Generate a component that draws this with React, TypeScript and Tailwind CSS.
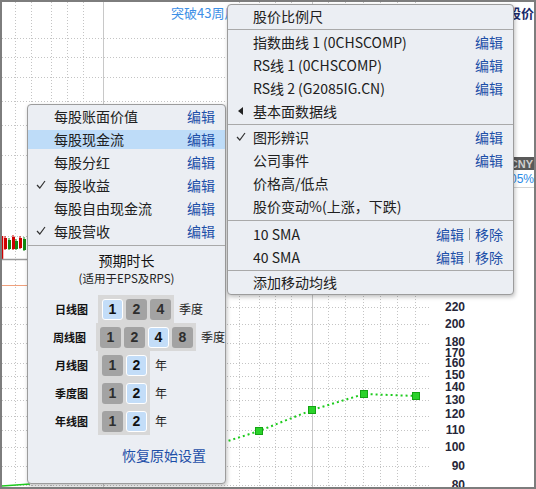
import React from 'react';

const H_LINES = [38, 57, 77, 101, 125, 155, 184, 207, 236, 307, 324, 343, 363, 376, 388, 400, 416, 430, 447, 466, 485];
const V_DOTS = [15, 31, 51, 67, 83, 239, 259, 275, 291, 328, 345, 363, 380, 397, 415];
const V_SOLID = [103, 312];
const AXIS: [string, number][] = [
  ['220', 307], ['200', 324], ['180', 342], ['170', 353], ['160', 363], ['150', 375], ['140', 387],
  ['130', 400], ['120', 414], ['110', 430], ['100', 447], ['90', 466], ['80', 485],
];
const GREEN_PTS: [number, number][] = [[200, 450], [259, 431], [312, 410], [364, 394], [416, 396]];

function Chart() {
  return (
    <svg className="absolute left-0 top-0" width={532} height={485} viewBox="2 2 532 485">
      {H_LINES.map((y) => (
        <line key={'h' + y} x1={2} x2={430} y1={y + 0.5} y2={y + 0.5} stroke="#c4c4c4" strokeDasharray="1 2" />
      ))}
      {V_DOTS.map((x) => (
        <line key={'v' + x} x1={x + 0.5} x2={x + 0.5} y1={2} y2={488} stroke="#c4c4c4" strokeDasharray="1 2" />
      ))}
      {V_SOLID.map((x) => (
        <line key={'s' + x} x1={x + 0.5} x2={x + 0.5} y1={2} y2={488} stroke="#c8c8c8" />
      ))}
      {/* price candles on the left */}
      <line x1={2.5} x2={2.5} y1={236} y2={259} stroke="#d00000" strokeWidth={1.5} />
      {[
        [4, 238, 11, '#d00000'], [8, 240, 9, '#138a13'], [12, 237, 12, '#d00000'], [15, 241, 8, '#138a13'],
        [19, 238, 10, '#d00000'], [23, 239, 11, '#138a13'],
      ].map(([x, y, h, c], i) => (
        <g key={i}>
          <line x1={(x as number) + 1} x2={(x as number) + 1} y1={(y as number) - 2} y2={(y as number) + (h as number) + 1} stroke={c as string} />
          <rect x={x as number} y={y as number} width={3} height={h as number} fill={c as string} />
        </g>
      ))}
      <line x1={2} x2={30} y1={259.5} y2={259.5} stroke="#9a9a9a" strokeWidth={1.5} />
      <line x1={2} x2={30} y1={285.5} y2={285.5} stroke="#f0a07c" />
      <line x1={2} x2={30} y1={486} y2={484} stroke="#1ecb1e" strokeWidth={1.5} />
      {/* green fundamental line */}
      <polyline
        points={GREEN_PTS.map((p) => p.join(',')).join(' ')}
        fill="none"
        stroke="#1ecb1e"
        strokeWidth={2}
        strokeDasharray="2 3"
      />
      {GREEN_PTS.slice(1).map(([x, y]) => (
        <rect key={x} x={x - 3.5} y={y - 3.5} width={7} height={7} fill="#2ad22a" stroke="#13a313" />
      ))}
      {AXIS.map(([t, y]) => (
        <text
          key={t}
          x={465}
          y={y + 4.3}
          textAnchor="end"
          fontFamily="Liberation Sans, Arial, sans-serif"
          fontWeight={700}
          fontSize={12}
          fill="#262638"
        >
          {t}
        </text>
      ))}
      <text x={171} y={18} fontFamily="Noto Sans CJK SC, sans-serif" fontSize={13} fill="#3d8fe6">
        突破43周后
      </text>
      <text x={508} y={18} fontFamily="Noto Sans CJK SC, sans-serif" fontWeight={700} fontSize={13} fill="#1a2a6a">
        股价
      </text>
      <rect x={500} y={157} width={34} height={13} fill="#5a5a5a" />
      <text x={533} y={167.5} textAnchor="end" fontFamily="Liberation Sans, Arial, sans-serif" fontWeight={700} fontSize={11} fill="#cfcfcf">
        CNY
      </text>
      <text x={534} y={183} textAnchor="end" fontFamily="Liberation Sans, Arial, sans-serif" fontSize={12} fill="#2a8ae6">
        +1.05%
      </text>
      <line x1={500} x2={534} y1={187.5} y2={187.5} stroke="#d4d4d4" />
    </svg>
  );
}

function Check() {
  return (
    <svg width={10} height={9} viewBox="0 0 10 9">
      <path d="M1 5 L3.8 8 L9 1" fill="none" stroke="#333" strokeWidth={1.2} />
    </svg>
  );
}

function LeftArrow() {
  return (
    <svg width={5} height={8} viewBox="0 0 5 8">
      <path d="M5 0 L0 4 L5 8 Z" fill="#222" />
    </svg>
  );
}

type RowProps = {
  label: string;
  check?: boolean;
  arrow?: boolean;
  edit?: boolean;
  remove?: boolean;
  active?: boolean;
  h?: string;
  slot: string;
};

function MenuRow({ label, check, arrow, edit, remove, active, h = 'h-[23px]', slot }: RowProps) {
  return (
    <div className={`flex items-center ${h}`}>
      <div className={`flex h-[19px] w-full items-center pb-[2px] pr-[10px] ${active ? 'bg-[#bedcf8]' : ''}`}>
        <div className={`flex ${slot} shrink-0 justify-center`}>
          {check && <Check />}
          {arrow && <LeftArrow />}
        </div>
        <span className="flex-1 whitespace-nowrap text-[#202020]">{label}</span>
        {edit && <span className="text-[#1d4fa8]">编辑</span>}
        {remove && (
          <>
            <span className="mx-[5px] h-[12px] w-px bg-[#9a9a9a]" />
            <span className="text-[#1d4fa8]">移除</span>
          </>
        )}
      </div>
    </div>
  );
}

function Sep({ pad = 'py-[1px]' }: { pad?: string }) {
  return (
    <div className={pad}>
      <div className="h-px bg-[#a9a9a9]" />
    </div>
  );
}

const SUB_ITEMS = [
  { label: '每股账面价值' },
  { label: '每股现金流', active: true },
  { label: '每股分红' },
  { label: '每股收益', check: true },
  { label: '每股自由现金流' },
  { label: '每股营收', check: true },
];

const PERIODS = [
  { name: '日线图', opts: ['1', '2', '4'], sel: '1', unit: '季度' },
  { name: '周线图', opts: ['1', '2', '4', '8'], sel: '4', unit: '季度' },
  { name: '月线图', opts: ['1', '2'], sel: '2', unit: '年' },
  { name: '季度图', opts: ['1', '2'], sel: '2', unit: '年' },
  { name: '年线图', opts: ['1', '2'], sel: '2', unit: '年' },
];

function SubMenu() {
  return (
    <div className="absolute left-[25px] top-[102px] h-[380px] w-[199px] overflow-hidden rounded-[4px] border border-[#9c9c9c] bg-[#ebeef3] text-[14px] leading-none shadow-[1px_2px_4px_rgba(0,0,0,0.25)]">
      {SUB_ITEMS.map((it) => (
        <MenuRow key={it.label} slot="w-[26px]" edit {...it} />
      ))}
      <Sep pad="pt-[2px] pb-[1px]" />
      <div className="pt-[4px]">
        <div className="text-center leading-[18px] text-[#111]">预期时长</div>
        <div className="mt-[2px] text-center text-[11.5px] leading-[14px] text-[#222]">(适用于EPS及RPS)</div>
        <div className="mt-[10px] flex flex-col">
          {PERIODS.map((p) => (
            <div key={p.name} className="flex h-[28px] items-center">
              <div className="w-[60px] text-right text-[11px] font-bold text-[#111]">{p.name}</div>
              <div className="ml-[10px] flex h-full items-center gap-[3px] bg-[#d8d8d8] pl-[4px] pr-[3px]">
                {p.opts.map((o) => (
                  <div
                    key={o}
                    className={`flex h-[21px] w-[21px] items-center justify-center rounded-[3px] font-['Liberation_Sans',Arial,sans-serif] text-[14px] font-bold ${
                      o === p.sel ? 'border border-white bg-[#c3ddf8] text-[#111]' : 'bg-[#a3a3a3] text-[#2e2e2e]'
                    }`}
                  >
                    {o}
                  </div>
                ))}
              </div>
              <span className="ml-[5px] whitespace-nowrap text-[12px] text-[#222]">{p.unit}</span>
            </div>
          ))}
        </div>
        <div className="mt-[11px] pr-[19px] text-right leading-[18px] text-[#1d4fa8]">恢复原始设置</div>
      </div>
    </div>
  );
}

function MainMenu() {
  const s = 'w-[25px]';
  return (
    <div className="absolute left-[225px] top-[2px] z-10 w-[287px] overflow-hidden rounded-[4px] border border-[#9c9c9c] bg-[#ebeef3] text-[14px] leading-none shadow-[1px_2px_4px_rgba(0,0,0,0.25)]">
      <MenuRow slot={s} label="股价比例尺" />
      <Sep />
      <MenuRow slot={s} label="指数曲线 1 (0CHSCOMP)" edit />
      <MenuRow slot={s} label="RS线 1 (0CHSCOMP)" edit />
      <MenuRow slot={s} label="RS线 2 (G2085IG.CN)" edit />
      <MenuRow slot={s} label="基本面数据线" arrow />
      <Sep />
      <MenuRow slot={s} label="图形辨识" check edit />
      <MenuRow slot={s} label="公司事件" edit />
      <MenuRow slot={s} label="价格高/低点" />
      <MenuRow slot={s} label="股价变动%(上涨，下跌)" />
      <Sep pad="py-[2px]" />
      <MenuRow slot={s} label="10 SMA" edit remove />
      <MenuRow slot={s} label="40 SMA" edit remove />
      <Sep />
      <MenuRow slot={s} label="添加移动均线" h="h-[22px]" />
    </div>
  );
}

export default function App() {
  return (
    <div className="relative h-[489px] w-[536px] overflow-hidden border-2 border-[#7d7d7d] bg-white font-['Noto_Sans_CJK_SC','Noto_Sans',sans-serif]">
      <Chart />
      <SubMenu />
      <MainMenu />
    </div>
  );
}
